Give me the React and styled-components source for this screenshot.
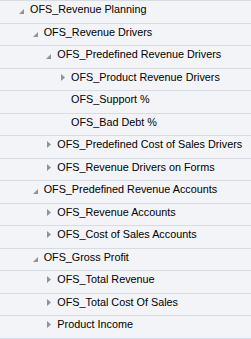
import styled, { createGlobalStyle } from 'styled-components';

const Global = createGlobalStyle`
  html, body {
    margin: 0;
    padding: 0;
    background: #f3f4f7;
  }
`;

const Tree = styled.div`
  width: 251px;
  height: 339px;
  overflow: hidden;
  background: #f3f4f7;
  border-top: 1px solid #d6dce2;
  box-sizing: border-box;
  font-family: "Liberation Sans", Arial, sans-serif;
  font-size: 10.8px;
  color: #000;
`;

const Row = styled.div`
  box-sizing: border-box;
  height: 22.5px;
  border-bottom: 1px solid #d6dce2;
  display: flex;
  align-items: flex-start;
  padding-top: 1px;
  padding-left: ${(p) => 16 + p.$level * 13.67}px;
  white-space: nowrap;
`;

const IconSlot = styled.span`
  width: 14px;
  height: 14px;
  flex: none;
  display: flex;
  justify-content: flex-end;
  align-items: ${(p) => (p.$open ? 'flex-end' : 'center')};
  padding-right: 6px;
  padding-bottom: ${(p) => (p.$open ? '2px' : '0')};
  padding-top: ${(p) => (p.$open ? '0' : '1px')};
  box-sizing: border-box;
`;

const Label = styled.span`
  line-height: 14px;
`;

const Expanded = () => (
  <svg width="5" height="5" viewBox="0 0 5 5">
    <polygon points="5,0 5,5 0,5" fill="#8f9296" />
  </svg>
);

const Collapsed = () => (
  <svg width="4" height="7" viewBox="0 0 4 7">
    <polygon points="0,0 4,3.5 0,7" fill="#8f9296" />
  </svg>
);

const nodes = [
  { label: 'OFS_Revenue Planning', level: 0, state: 'open' },
  { label: 'OFS_Revenue Drivers', level: 1, state: 'open' },
  { label: 'OFS_Predefined Revenue Drivers', level: 2, state: 'open' },
  { label: 'OFS_Product Revenue Drivers', level: 3, state: 'closed' },
  { label: 'OFS_Support %', level: 3 },
  { label: 'OFS_Bad Debt %', level: 3 },
  { label: 'OFS_Predefined Cost of Sales Drivers', level: 2, state: 'closed' },
  { label: 'OFS_Revenue Drivers on Forms', level: 2, state: 'closed' },
  { label: 'OFS_Predefined Revenue Accounts', level: 1, state: 'open' },
  { label: 'OFS_Revenue Accounts', level: 2, state: 'closed' },
  { label: 'OFS_Cost of Sales Accounts', level: 2, state: 'closed' },
  { label: 'OFS_Gross Profit', level: 1, state: 'open' },
  { label: 'OFS_Total Revenue', level: 2, state: 'closed' },
  { label: 'OFS_Total Cost Of Sales', level: 2, state: 'closed' },
  { label: 'Product Income', level: 2, state: 'closed' },
];

export default function App() {
  return (
    <>
      <Global />
      <Tree>
        {nodes.map((n, i) => (
          <Row key={i} $level={n.level}>
            <IconSlot $open={n.state === 'open'}>
              {n.state === 'open' && <Expanded />}
              {n.state === 'closed' && <Collapsed />}
            </IconSlot>
            <Label>{n.label}</Label>
          </Row>
        ))}
      </Tree>
    </>
  );
}
